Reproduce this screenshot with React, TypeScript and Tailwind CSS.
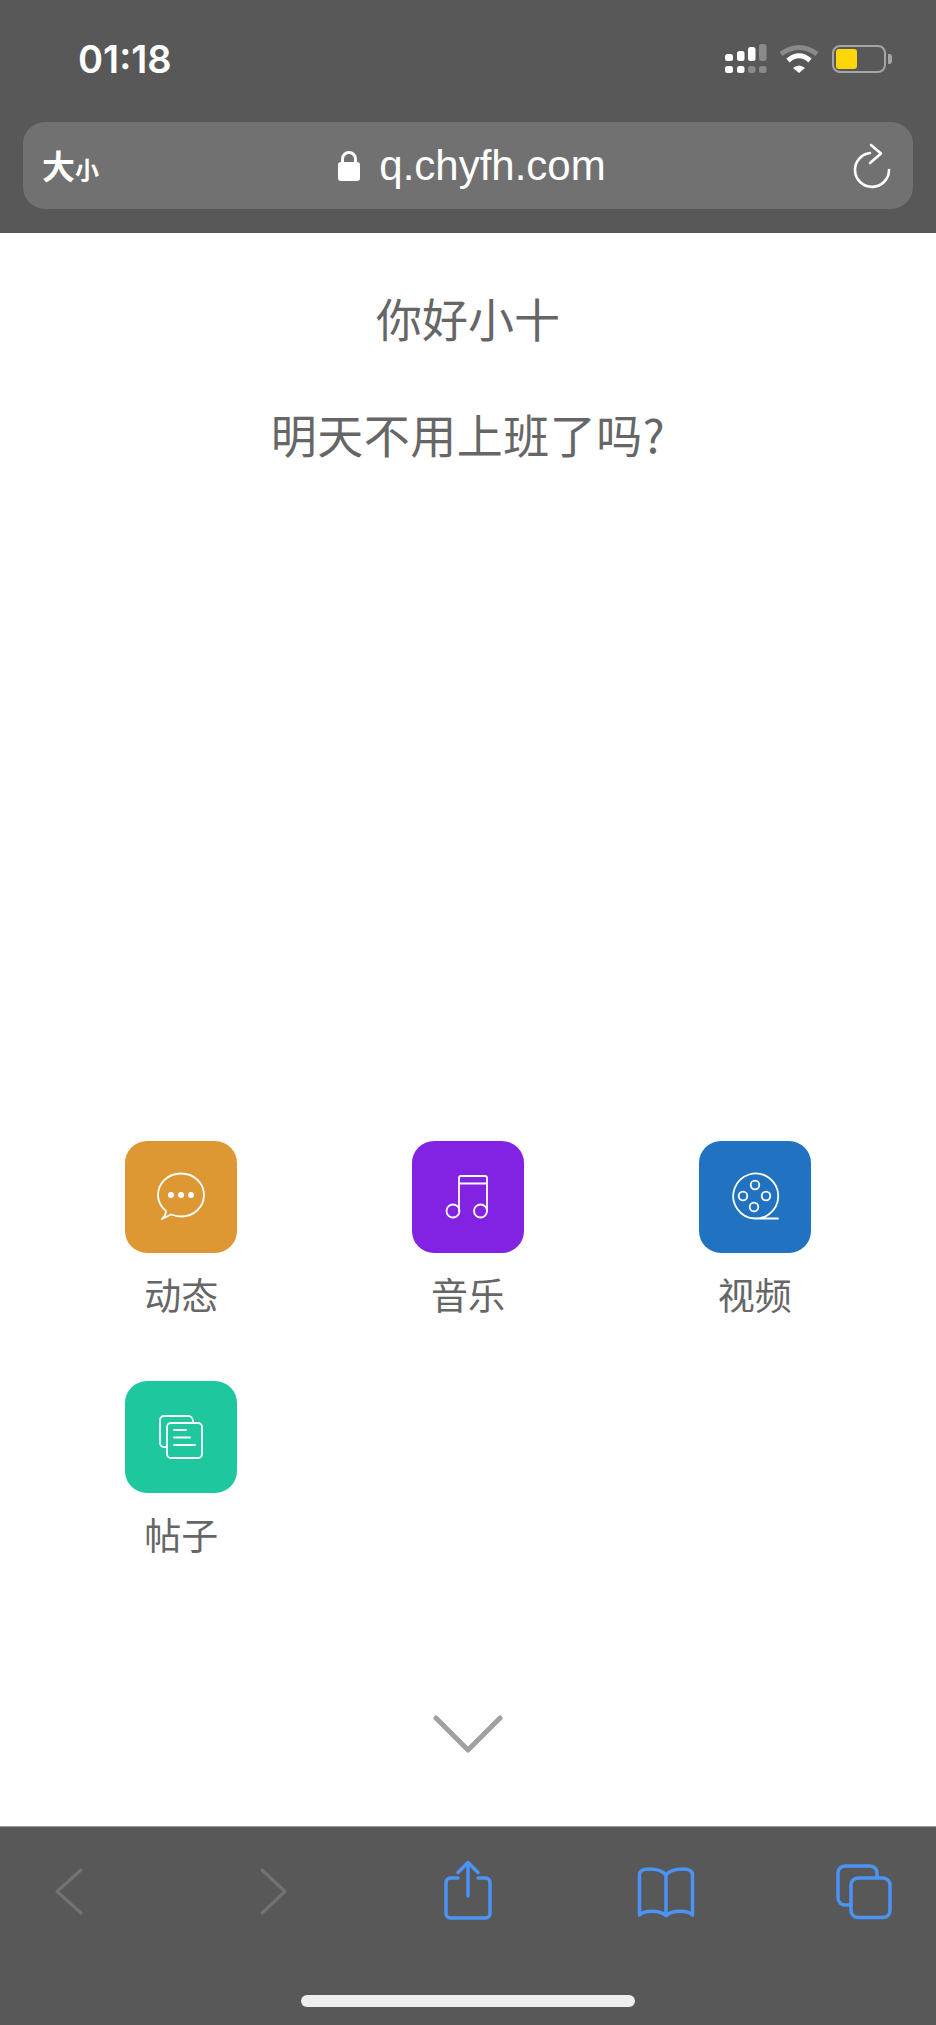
import type { ReactNode } from "react";

const apps: { label: string; color: string; icon: ReactNode }[] = [
  {
    label: "动态",
    color: "bg-[#dd9833]",
    icon: (
      <>
        <path d="M41 70C36 66 33 60 33 54C33 42 43 32.5 56 32.5C69 32.5 79 42 79 54C79 66 69 75.5 56 75.5C52 75.5 49 74.5 46 73.5L37 78C39 76 41 73 41 70Z" />
        <circle cx="46" cy="54" r="3" fill="white" stroke="none" />
        <circle cx="56" cy="54" r="3" fill="white" stroke="none" />
        <circle cx="66" cy="54" r="3" fill="white" stroke="none" />
      </>
    ),
  },
  {
    label: "音乐",
    color: "bg-[#8222e3]",
    icon: (
      <>
        <path d="M47 70V37a2 2 0 0 1 2-2H73a2 2 0 0 1 2 2V70M47 42.5H75" />
        <circle cx="41" cy="70" r="6.5" />
        <circle cx="68.5" cy="70" r="6.5" />
      </>
    ),
  },
  {
    label: "视频",
    color: "bg-[#2173c1]",
    icon: (
      <>
        <path d="M56 77.5A22.5 22.5 0 1 1 70 73.2C67 75.5 62 77.5 56 77.5H79" />
        <circle cx="56" cy="44" r="4.3" />
        <circle cx="44" cy="55" r="4.3" />
        <circle cx="67" cy="55" r="4.3" />
        <circle cx="55" cy="66" r="4.3" />
      </>
    ),
  },
  {
    label: "帖子",
    color: "bg-[#1fc79f]",
    icon: (
      <>
        <path d="M42 66H39a4 4 0 0 1-4-4V39a4 4 0 0 1 4-4H63a5 5 0 0 1 5 5V42" />
        <rect x="42" y="42" width="35" height="35" rx="4" />
        <path d="M49 49H61M49 56.5H65M49 64H70" />
      </>
    ),
  },
];

function StatusIcons() {
  return (
    <div className="flex items-center">
      <svg width="42" height="30" viewBox="0 0 42 30" fill="white">
        <rect x="0" y="10" width="8" height="7" rx="2.5" />
        <rect x="12" y="7" width="7.5" height="10" rx="2.5" />
        <rect x="23" y="3" width="7.5" height="14" rx="2.5" />
        <rect x="34" y="0" width="7.5" height="17" rx="2.5" fill="#8a8a8a" />
        <rect x="0" y="22" width="8" height="7" rx="2.5" />
        <rect x="12" y="22" width="7.5" height="7" rx="2.5" />
        <rect x="23" y="22" width="7.5" height="7" rx="2.5" fill="#8a8a8a" />
        <rect x="34" y="22" width="7.5" height="7" rx="2.5" fill="#8a8a8a" />
      </svg>
      <svg className="ml-3" width="40" height="30" viewBox="0 0 40 30" fill="none">
        <path d="M2 10Q20 -3 38 10" stroke="#8a8a8a" strokeWidth="5" />
        <path d="M9 16.5Q20 7 31 16.5" stroke="white" strokeWidth="5" />
        <path d="M14 24Q20 19 26 24L20 29Z" fill="white" />
      </svg>
      <div className="ml-[13px] flex items-center">
        <div className="flex h-[28px] w-[54px] items-center rounded-[8px] border-2 border-[#a5a5a5] pl-[2px]">
          <div className="h-[20px] w-[21px] rounded-[3px] bg-[#ffd60a]" />
        </div>
        <div className="ml-[2px] h-[10px] w-[4px] rounded-r-[3px] bg-[#a5a5a5]" />
      </div>
    </div>
  );
}

export default function App() {
  return (
    <div className="flex h-[2025px] w-[936px] flex-col overflow-hidden bg-white font-['Noto_Sans_CJK_SC',sans-serif]">
      {/* Status bar and address bar */}
      <header className="h-[233px] bg-[#585858]">
        <div className="flex h-[122px] items-center justify-between pr-[44px] pb-[4px] pl-[78px]">
          <span className="font-['Inter','Noto_Sans_CJK_SC',sans-serif] text-[38px] leading-none font-semibold text-white">
            01:18
          </span>
          <StatusIcons />
        </div>
        <div className="mx-[23px] grid h-[87px] grid-cols-[1fr_auto_1fr] items-center rounded-[22px] bg-[#717171] pr-[21px] pl-[19px] text-white">
          <div className="flex items-baseline font-bold">
            <span className="text-[33px] leading-none">大</span>
            <span className="text-[24px] leading-none">小</span>
          </div>
          <div className="flex items-center pl-[10px]">
            <svg width="22" height="32" viewBox="0 0 22 32" fill="none">
              <path d="M4.5 13V9a6.5 6.5 0 0 1 13 0V13" stroke="white" strokeWidth="3" />
              <rect x="0" y="12" width="22" height="19" rx="3" fill="white" />
            </svg>
            <span className="ml-[19px] font-['Liberation_Sans',sans-serif] text-[42px] leading-none">
              q.chyfh.com
            </span>
          </div>
          <div className="flex justify-end">
            <svg width="40" height="48" viewBox="0 0 40 48" fill="none" stroke="white" strokeWidth="2.6" strokeLinecap="round" strokeLinejoin="round">
              <path d="M18 11A17 17 0 1 0 37 28" />
              <path d="M19 3L29 11.5L18 21" />
            </svg>
          </div>
        </div>
      </header>

      <main className="flex-1">
        <div className="flex flex-col items-center pt-[52px] text-[46px] leading-[64px] text-[#666666]">
          <p>你好小十</p>
          <p className="mt-[52px] tracking-[0.5px]">明天不用上班了吗?</p>
        </div>

        {/* App shortcuts */}
        <div className="mt-[676px] grid grid-cols-3 gap-y-[57px] px-[38px]">
          {apps.map((app) => (
            <div key={app.label} className="flex flex-col items-center">
              <div className={`h-[112px] w-[112px] rounded-[22px] ${app.color}`}>
                <svg width="112" height="112" viewBox="0 0 112 112" fill="none" stroke="white" strokeWidth="1.8" strokeLinecap="round" strokeLinejoin="round">
                  {app.icon}
                </svg>
              </div>
              <span className="mt-[14px] mb-[3px] text-[37px] leading-[54px] text-[#666666]">{app.label}</span>
            </div>
          ))}
        </div>

        <div className="mt-[150px] flex justify-center">
          <svg width="70" height="40" viewBox="0 0 70 40" fill="none" stroke="#a0a0a0" strokeWidth="5" strokeLinecap="round" strokeLinejoin="round">
            <path d="M3 4L35 36L67 4" />
          </svg>
        </div>
      </main>

      {/* Safari toolbar */}
      <footer className="flex h-[199px] flex-col border-t border-[#9a9a9a] bg-[#585858]">
        <div className="flex pt-[33px] pl-[39px]">
          <svg width="60" height="60" viewBox="0 0 60 60" fill="none" stroke="#727272" strokeWidth="3.2" strokeLinecap="round" strokeLinejoin="round">
            <path d="M42 10L18 31.5L42 53" />
          </svg>
          <svg className="ml-[144px]" width="60" height="60" viewBox="0 0 60 60" fill="none" stroke="#727272" strokeWidth="3.2" strokeLinecap="round" strokeLinejoin="round">
            <path d="M19 10L42 31.5L19 53" />
          </svg>
          <svg className="ml-[135px]" width="60" height="60" viewBox="0 0 60 60" fill="none" stroke="#4b93f5" strokeWidth="3.5" strokeLinecap="round" strokeLinejoin="round">
            <path d="M20 18H12.5a4.5 4.5 0 0 0-4.5 4.5V53.5A4.5 4.5 0 0 0 12.5 58H47.5A4.5 4.5 0 0 0 52 53.5V22.5A4.5 4.5 0 0 0 47.5 18H40" />
            <path d="M30 3V36M20 12.5L30 2.5L40 12.5" />
          </svg>
          <svg className="ml-[137px]" width="62" height="60" viewBox="0 0 62 60" fill="none" stroke="#4b93f5" strokeWidth="3.5" strokeLinecap="round" strokeLinejoin="round">
            <path d="M31 15C27 10 20 9 14 9C8 9 4.5 11 4.5 15V55C10 50 24 50 31 55.5C38 50 52 50 57.5 55V15C57.5 11 54 9 48 9C42 9 35 10 31 15V55" />
          </svg>
          <svg className="ml-[136px]" width="60" height="60" viewBox="0 0 60 60" fill="none" stroke="#4b93f5" strokeWidth="3.5" strokeLinecap="round" strokeLinejoin="round">
            <path d="M16 45H12a7 7 0 0 1-7-7V13a7 7 0 0 1 7-7H37a7 7 0 0 1 7 7V17" />
            <rect x="18" y="18" width="39" height="39.5" rx="7" />
          </svg>
        </div>
        <div className="mt-[75px] flex justify-center">
          <div className="h-[12px] w-[334px] rounded-full bg-[#eeeeee]" />
        </div>
      </footer>
    </div>
  );
}
